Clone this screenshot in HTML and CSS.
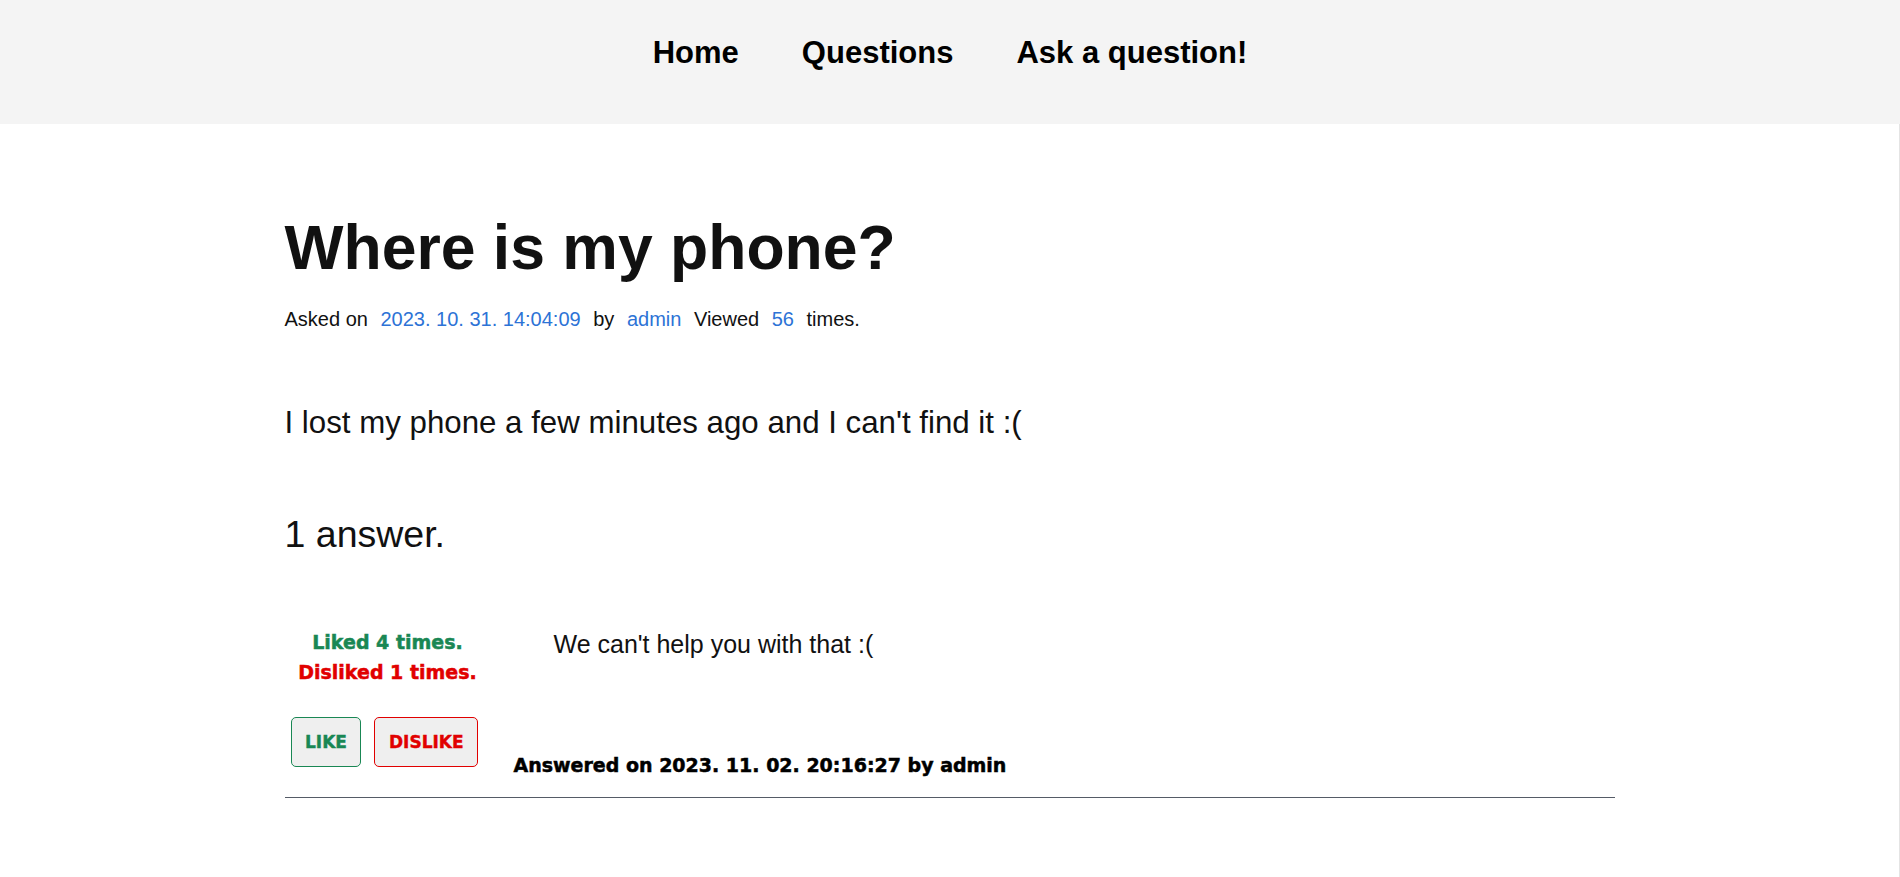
FILE: index.html
```html
<!DOCTYPE html>
<html lang="en">
<head>
<meta charset="utf-8">
<title>Where is my phone?</title>
<link rel="stylesheet" href="styles.css">
</head>
<body>
<header class="topbar">
  <nav class="nav">
    <a class="nav-link" href="#">Home</a>
    <a class="nav-link" href="#">Questions</a>
    <a class="nav-link" href="#">Ask a question!</a>
  </nav>
</header>
<div class="page">
  <main class="content">
    <h1 class="title">Where is my phone?</h1>
    <p class="meta">Asked on <a class="meta-link" href="#">2023. 10. 31. 14:04:09</a> by <a class="meta-link" href="#">admin</a> Viewed <span class="meta-link">56</span> times.</p>
    <p class="question-body">I lost my phone a few minutes ago and I can't find it :(</p>
    <h2 class="answer-count">1 answer.</h2>
    <section class="answer">
      <div class="votes">
        <div class="vote-stats">
          <div class="liked">Liked 4 times.</div>
          <div class="disliked">Disliked 1 times.</div>
        </div>
        <div class="vote-buttons">
          <button class="btn btn-like" type="button">LIKE</button>
          <button class="btn btn-dislike" type="button">DISLIKE</button>
        </div>
      </div>
      <div class="answer-body">
        <p class="answer-text">We can't help you with that :(</p>
        <p class="answered">Answered on 2023. 11. 02. 20:16:27 by admin</p>
      </div>
    </section>
    <hr class="divider">
  </main>
</div>
</body>
</html>
```
FILE: styles.css
```css
html, body {
  margin: 0;
  padding: 0;
  background: #ffffff;
  overflow: hidden;
}

body {
  font-family: "Liberation Sans", Arial, sans-serif;
  color: #111111;
}

.topbar {
  box-sizing: border-box;
  height: 124px;
  padding-top: 35px;
  background: #f4f4f4;
}

.nav {
  display: flex;
  justify-content: center;
  gap: 63px;
}

.nav-link {
  font-size: 31px;
  line-height: 36px;
  font-weight: 700;
  color: #000000;
  text-decoration: none;
}

.page {
  display: flow-root;
  box-sizing: border-box;
  height: 753px;
  border-right: 1px solid #e4e4e4;
}

.content {
  width: 1330px;
  margin: 0 auto;
}

.title {
  margin: 87px 0 0;
  font-size: 62.5px;
  line-height: 72px;
  font-weight: 700;
  color: #111111;
}

.meta {
  margin: 25px 0 0;
  font-size: 20px;
  line-height: 23px;
  color: #111111;
}

.meta-link {
  color: #2d73d6;
  text-decoration: none;
  margin: 0 7px;
}

.question-body {
  margin: 74px 0 0;
  font-size: 31.25px;
  line-height: 36px;
}

.answer-count {
  margin: 72px 0 0;
  font-size: 37.5px;
  line-height: 43px;
  font-weight: 400;
}

.answer {
  display: flex;
  margin-top: 71px;
}

.votes {
  width: 206px;
  flex: none;
}

.vote-stats {
  text-align: center;
  font-family: "DejaVu Sans", sans-serif;
  font-weight: 700;
  font-size: 19px;
  line-height: 30px;
  -webkit-text-stroke: 0.5px currentColor;
}

.liked {
  color: #198754;
}

.disliked {
  color: #e10000;
}

.vote-buttons {
  display: flex;
  gap: 13px;
  margin-top: 30px;
  padding-left: 6px;
}

.btn {
  box-sizing: border-box;
  height: 50px;
  padding: 0 13.5px;
  background: #efefef;
  border-radius: 5px;
  font-family: "DejaVu Sans", sans-serif;
  font-weight: 700;
  font-size: 17px;
  -webkit-text-stroke: 0.4px currentColor;
  cursor: pointer;
}

.btn-like {
  border: 1px solid #198754;
  color: #198754;
}

.btn-dislike {
  border: 1px solid #e10000;
  color: #e10000;
}

.answer-body {
  margin-left: 23px;
  flex: 1;
}

.answer-text {
  margin: 3px 0 0 40px;
  font-size: 25px;
  line-height: 29px;
}

.answered {
  margin: 95px 0 0;
  font-family: "DejaVu Sans", sans-serif;
  font-weight: 700;
  font-size: 19px;
  line-height: 23px;
  color: #000000;
  -webkit-text-stroke: 0.5px currentColor;
}

.divider {
  margin: 20px 0 0;
  border: none;
  border-top: 1px solid #555b66;
  height: 0;
}
```
